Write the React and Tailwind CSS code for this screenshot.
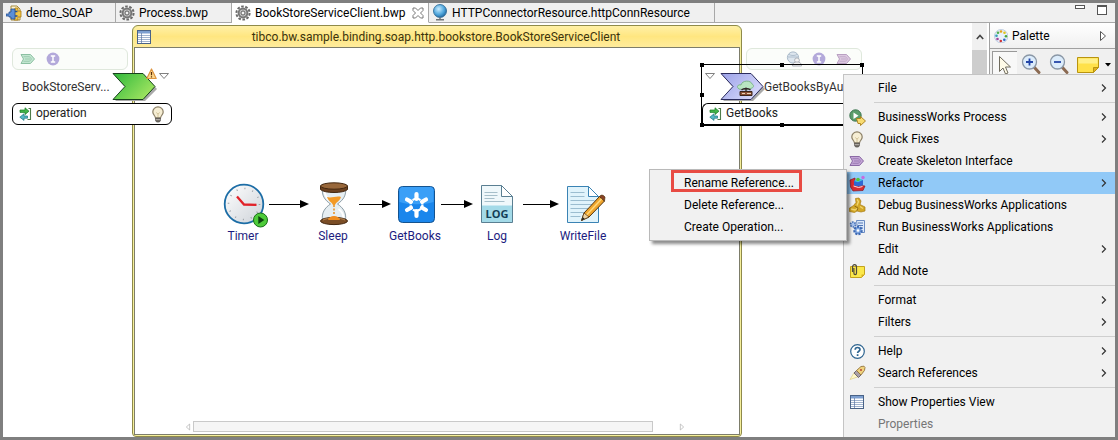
import clsx from 'clsx';

const GearIcon = () => (
  <svg viewBox="0 0 16 16" className="size-4 shrink-0">
    <circle cx="8" cy="8" r="6.6" fill="none" stroke="#6a6a6a" strokeWidth="2" strokeDasharray="2.6 1.55" />
    <circle cx="8" cy="8" r="4.4" fill="#c4c4c4" stroke="#777" strokeWidth="2" />
    <circle cx="8" cy="8" r="2" fill="#f4f4f4" stroke="#555" strokeWidth="0.9" />
  </svg>
);

const SoapIcon = () => (
  <svg viewBox="0 0 16 16" className="size-4 shrink-0">
    <path d="M5 1h6l3 3v11H5z" fill="#fdf3d0" stroke="#a58a3c" />
    <path d="M9 3h3v3h3v6h-3v3H8z" fill="#f2c545" stroke="#a8780f" strokeWidth="0.8" />
    <path d="M0 9h3V7h2V4h4v10H5v-2H3v-1H0z" fill="#5b8fd8" stroke="#274f91" strokeWidth="0.8" />
    <path d="M9 6.5h2.5M9 11h2.5" stroke="#274f91" strokeWidth="1.4" />
  </svg>
);

const GlobeIcon = () => (
  <svg viewBox="0 0 16 17" className="h-[17px] w-4 shrink-0">
    <defs>
      <radialGradient id="globe" cx="0.4" cy="0.35" r="0.7">
        <stop offset="0" stopColor="#c9ecff" />
        <stop offset="0.6" stopColor="#4fa6dc" />
        <stop offset="1" stopColor="#1d6199" />
      </radialGradient>
    </defs>
    <circle cx="8" cy="7" r="6.5" fill="url(#globe)" stroke="#23628f" strokeWidth="0.8" />
    <path d="M8 13.5v2M4 15.8h8" stroke="#6f7478" strokeWidth="1.5" />
  </svg>
);

const TableIcon = ({ className }) => (
  <svg viewBox="0 0 14 14" className={clsx('size-[14px] shrink-0', className)}>
    <rect x="0.5" y="0.5" width="13" height="13" fill="#fff" stroke="#4a6387" />
    <path d="M1 1h12v2.500H1z" fill="#7d9fd0" />
    <path d="M1 5.5h12M1 7.5h12M1 9.5h12M1 11.5h12" stroke="#a2b4cf" />
    <path d="M4.5 3v10" stroke="#5a74a0" strokeWidth="0.7" />
  </svg>
);

const BulbIcon = ({ className }) => (
  <svg viewBox="0 0 14 17" className={clsx('h-[17px] w-[14px] shrink-0', className)}>
    <path d="M7 .8a5.2 5.2 0 0 0-5.2 5.2c0 2.6 2.4 3.6 2.7 6h5c.3-2.4 2.7-3.4 2.7-6A5.2 5.2 0 0 0 7 .8z" fill="#f6eed4" stroke="#8b7f66" strokeWidth="1.2" />
    <path d="M5.2 6.5 7 8l1.8-1.5M7 8v4" fill="none" stroke="#c9b98c" strokeWidth="0.8" />
    <path d="M4.6 12h4.8v2.6L8.4 16H5.6l-1-1.4z" fill="#77726c" stroke="#4c4843" strokeWidth="0.7" />
    <path d="M4.8 13.5h4.4" stroke="#c4c0ba" strokeWidth="0.7" />
  </svg>
);

const OperationIcon = () => (
  <svg viewBox="0 0 13 14" className="h-[14px] w-[13px] shrink-0">
    <path d="M1 3h5V.8l4 3.4-4 3.4V5.4H1z" fill="#42b649" stroke="#187a24" strokeWidth="0.7" />
    <path d="M8.5 9H5V6.8l-4.2 3.4L5 13.4v-2.2h3.5z" fill="#57b9c4" stroke="#1b7480" strokeWidth="0.7" />
    <path d="M9.5 1.5h2v11h-3" fill="none" stroke="#4f7d4a" strokeWidth="1.1" />
  </svg>
);

const MiniChevron = ({ fill, stroke, className }) => (
  <svg viewBox="0 0 16 12" className={clsx('h-3 w-4 shrink-0', className)}>
    <path d="M1 1.500h9.500l4 4.500-4 4.500H1L3.500 6z" fill={fill} stroke={stroke} />
    <path d="M3.500 3.700h6L11.500 6l-2 2.300h-6M5 6h5" fill="none" stroke={stroke} strokeWidth="0.7" />
  </svg>
);

const InfoIcon = () => (
  <svg viewBox="0 0 14 14" className="size-[14px] shrink-0">
    <circle cx="7" cy="7" r="6.4" fill="#b3a9da" />
    <path d="M4.8 4h4.4M7 4v6M4.8 10h4.4" stroke="#fff" strokeWidth="1.5" />
  </svg>
);

const UserGlobeIcon = () => (
  <svg viewBox="0 0 16 16" className="size-4 shrink-0">
    <circle cx="7" cy="6.5" r="5.6" fill="#dde6ee" stroke="#a9bac9" />
    <path d="M1.8 6h10.4M3 3.500c2 1.300 6 1.300 8 0" fill="none" stroke="#a9bac9" strokeWidth="0.9" />
    <circle cx="11" cy="9.3" r="2.4" fill="#f3f3f3" stroke="#a7acb3" strokeWidth="0.9" />
    <path d="M6.500 15c0-3.200 2-4 4.500-4s4.500.8 4.500 4z" fill="#f3f3f3" stroke="#a7acb3" strokeWidth="0.9" />
  </svg>
);

const WarningIcon = () => (
  <svg viewBox="0 0 11 12" className="h-3 w-[11px]">
    <path d="M5.500 1 10.200 10.500H.8z" fill="#fcd68a" stroke="#dd9440" strokeWidth="1.200" strokeLinejoin="round" />
    <path d="M5.500 4v3.300M5.500 8.300v1.200" stroke="#5b2d07" strokeWidth="1.200" />
  </svg>
);

const DownTriangle = () => (
  <svg viewBox="0 0 12 8" className="h-2 w-3">
    <path d="M1.500 1.500h9L6 6.500z" fill="#fff" stroke="#808080" />
  </svg>
);

const RightTriangle = ({ className }) => (
  <svg viewBox="0 0 8 12" className={className}>
    <path d="M1.500 1.500v9L6.500 6z" fill="#fff" stroke="currentColor" />
  </svg>
);

const ServiceShape = ({ green }) => (
  <svg viewBox="0 0 46 30" className="h-[30px] w-[46px] shrink-0">
    <defs>
      <linearGradient id="svcGreen" x1="0" y1="0" x2="1" y2="0.6">
        <stop offset="0" stopColor="#2fb83c" />
        <stop offset="1" stopColor="#a0e460" />
      </linearGradient>
      <linearGradient id="svcBlue" x1="0" y1="0" x2="1" y2="0.6">
        <stop offset="0" stopColor="#9ba1e8" />
        <stop offset="1" stopColor="#d7d9fa" />
      </linearGradient>
    </defs>
    <path d="M3 4h30l12 13-12 12H3l12-12z" fill="#a9a9a9" />
    <path d="M1 1.500h30L43 14.500 31 27.500H1l12-13z" fill={green ? 'url(#svcGreen)' : 'url(#svcBlue)'} stroke={green ? '#17421c' : '#2c2c5e'} />
    {!green && (
      <g>
        <path d="M19 17c-3-2-1-5 2-4 1-5 10-5 11-1 2 1 2 3 0 4l-5 2z" fill="#b9e6c2" stroke="#77b084" strokeWidth="0.9" />
        <path d="M20 19.500h12v4H20z" fill="#8c5036" stroke="#39241b" />
        <path d="M26 15.500v4M21.500 18c2-2 7-2 9 0" stroke="#33282a" strokeWidth="1.300" fill="none" />
        <path d="M22 21.500h3M27 21.500h4" stroke="#e7d2b4" />
      </g>
    )}
  </svg>
);

/* ---- activity icons ---- */

const TimerIcon = () => (
  <svg viewBox="0 0 50 46" className="h-[46px] w-[50px]">
    <defs>
      <linearGradient id="clock" x1="0" y1="0" x2="1" y2="1">
        <stop offset="0" stopColor="#fff" />
        <stop offset="1" stopColor="#cdd2d8" />
      </linearGradient>
    </defs>
    <circle cx="26" cy="22" r="19.3" fill="url(#clock)" stroke="#1c6da6" strokeWidth="1.800" />
    <circle cx="26" cy="22" r="15.5" fill="none" stroke="#9aa0a6" strokeWidth="1.600" strokeDasharray="1 7.116" />
    <path d="M19 14.500 26 22.500 38.500 22.800" fill="none" stroke="#e12229" strokeWidth="2.300" />
    <circle cx="42.500" cy="38" r="7" fill="#4ecb3a" stroke="#176f16" />
    <path d="M40.300 34v8l6-4z" fill="#0c420e" />
  </svg>
);

const HourglassIcon = () => (
  <svg viewBox="0 0 48 46" className="h-[46px] w-12">
    <path d="M13.500 6h23c1 7-2 12-8 16 6 4 9 9 8 16h-23c-1-7 2-12 8-16-6-4-9-9-8-16z" fill="#e6eef2" stroke="#8d9da6" />
    <path d="M15.500 8c0 5 2 8 5 10M34.500 37c0-5-2-8-5-10" fill="none" stroke="#fff" strokeWidth="2" />
    <path d="M18 15c4 1.500 10-1.500 14 0-1 4-5 5-6 8h-2c-1-3-5-4-6-8z" fill="#f39a26" />
    <path d="M25 23v9" stroke="#e88e1e" strokeWidth="1.500" strokeDasharray="2 1.500" />
    <ellipse cx="25" cy="39" rx="13.500" ry="3.600" fill="#7a4d26" stroke="#432710" />
    <path d="M14 38c4-2.500 18-2.500 22 0" fill="none" stroke="#b8854f" />
    <path d="M19 38c1-3 3-4 6-4s5 1 6 4z" fill="#f08c1c" />
    <path d="M11.500 4v3.500c4 4 23 4 27 0V4z" fill="#6d4220" stroke="#432710" />
    <ellipse cx="25" cy="4" rx="13.500" ry="3.200" fill="#98673a" stroke="#432710" />
  </svg>
);

const InvokeIcon = () => (
  <svg viewBox="0 0 48 46" className="h-[46px] w-12">
    <rect x="7.500" y="4.500" width="36" height="36" rx="4" fill="#1a86ec" stroke="#14538f" />
    <path d="M8.500 7.500a3 3 0 0 1 3-2.500h28a3 3 0 0 1 3 2.500V20c-9 3-25 3-34 0z" fill="#3a9ff7" />
    <path
      d="M25.500 12v5M25.500 29v5M16 17.500l4 2.300M35 17.500l-4 2.300M16 28l4-2.300M35 28l-4-2.300"
      stroke="#fff"
      strokeWidth="4.200"
      strokeLinecap="round"
    />
    <circle cx="25.500" cy="22.700" r="6" fill="none" stroke="#fff" strokeWidth="2.200" strokeDasharray="3.500 1.200" />
  </svg>
);

const LogIcon = () => (
  <svg viewBox="0 0 48 46" className="h-[46px] w-12">
    <path d="M8.500 3.500h20l11 11v26h-31z" fill="#eff8fb" stroke="#5a7f92" />
    <path d="M28.500 3.500v11h11z" fill="#fff" stroke="#5a7f92" />
    <path d="M11.500 10.500h13M11.500 13.500h13M11.500 16.500h10M11.500 19.500h20" stroke="#a6bfca" />
    <path d="M9 23.500h30V40H9z" fill="#a3dae8" />
    <text x="24" y="36" textAnchor="middle" fill="#143f57" fontSize="11" fontWeight="700" fontFamily="Open Sans, sans-serif">LOG</text>
  </svg>
);

const WriteFileIcon = () => (
  <svg viewBox="0 0 48 46" className="h-[46px] w-12">
    <path d="M8.500 4.500h21l10 10v26h-31z" fill="#e0f3fb" stroke="#3a83b4" />
    <path d="M29.500 4.500v10h10z" fill="#fff" stroke="#3a83b4" />
    <path d="M11.500 10.500h14M11.500 14.500h14M11.500 18.500h24M11.500 22.500h24M11.500 26.500h18M11.500 30.500h14M11.500 34.500h10" stroke="#9bbdd0" />
    <path d="M22.500 38.500 25 31l15.500-16.500 5 4.500L30 35z" fill="#f0a52c" stroke="#53340f" />
    <path d="m27.500 33 15.500-16.500" stroke="#ffd97c" strokeWidth="1.500" />
    <path d="m40.500 14.500 1.500-1.300q2-.7 4 1.800l-.5 4z" fill="#8a4328" stroke="#53340f" strokeWidth="0.7" />
    <path d="m22.500 38.500 2.500-7.500 5 4z" fill="#eed4a4" stroke="#53340f" strokeWidth="0.7" />
    <path d="m22.500 38.500 1.200-3.500 2 1.700z" fill="#222" />
  </svg>
);

const Arrow = ({ className }) => (
  <div className={clsx('mt-[18px] flex h-2 shrink-0 items-center', className)}>
    <div className="h-px flex-1 bg-black" />
    <svg viewBox="0 0 9 8" className="h-2 w-[9px]">
      <path d="M0 0v8l9-4z" />
    </svg>
  </div>
);

const Activity = ({ icon, label }) => (
  <div className="flex w-12 shrink-0 flex-col items-center whitespace-nowrap text-[#1c1c80]">
    {icon}
    <span className="leading-4">{label}</span>
  </div>
);

/* ---- context menu icons ---- */

const ProcessIcon = () => (
  <svg viewBox="0 0 17 17" className="size-[17px]">
    <circle cx="6.5" cy="6.5" r="5.7" fill="#5a9d6b" stroke="#3c7550" />
    <path d="M4.500 3.500v6.500l5-3.200z" fill="#fff" />
    <path d="M7.500 9.500h4V7.500l5 4.500-5 4.500v-2H9z" fill="#f8dc72" stroke="#a87d17" strokeWidth="0.9" />
  </svg>
);

const RefactorIcon = () => (
  <svg viewBox="0 0 17 17" className="size-[17px]">
    <path d="M1 5 6 3v7l10 1-2 4.500-10 .5-2.500-4z" fill="#d92c31" stroke="#851a28" strokeWidth="0.7" />
    <path d="M5 6l4-2 5 1v5l-4 1.500-5-1z" fill="#2f66d3" />
    <path d="M5 6l4 1.200 5-2.200-5-1.500z" fill="#42c7e0" />
    <circle cx="9" cy="4.500" r="1.800" fill="#56c436" />
    <circle cx="14" cy="2.500" r="1.700" fill="#c76be0" />
    <path d="m4.500 11 5 1.500 4-1" stroke="#ffd9d9" fill="none" />
  </svg>
);

const DebugIcon = () => (
  <svg viewBox="0 0 17 17" className="size-[17px]">
    <path d="M6.500 1.500 10 1l2 3-1 3.500 5 2.500v4l-4 1-4-1-2.500 1.500-5-1-.5-3 4.500-3 2.500-3z" fill="#d3a726" stroke="#a87b12" strokeWidth="0.7" />
    <path d="m8 2.500 1.500 2-1.500 4M2 12l4 1 3-2M11 9.500l3 2" fill="none" stroke="#f1d56d" strokeWidth="1.300" />
    <path d="m5.500 9 3.500 2-1 2.500" fill="none" stroke="#8f6a10" />
  </svg>
);

const RunIcon = () => (
  <svg viewBox="0 0 17 17" className="size-[17px]">
    <path d="M7.500 1.500h8v12H9z" fill="#dce9fa" stroke="#6b8cc2" />
    <path d="M9 4h5M9 6.500h5M10 9h4" stroke="#5478b6" />
    <circle cx="4" cy="5.500" r="2.500" fill="#a7c3ee" stroke="#4a73b8" strokeWidth="1.700" strokeDasharray="1.600 1" />
    <circle cx="9" cy="11.500" r="3.700" fill="#7fa6e0" stroke="#3e69b3" strokeWidth="2.200" strokeDasharray="2 1.200" />
    <circle cx="9" cy="11.500" r="1.300" fill="#fff" />
  </svg>
);

const NoteIcon = () => (
  <svg viewBox="0 0 17 17" className="size-[17px]">
    <path d="M1.500 3.500h14v8l-3 3h-11z" fill="#fbe84a" stroke="#c4a31e" />
    <path d="M12.500 14.500v-3h3z" fill="#d8ae20" />
    <path d="M3.500 9V4a2 2.300 0 0 1 4 0v6a1.300 1.600 0 0 1-2.600 0V5" fill="none" stroke="#4f4a3b" strokeWidth="1.200" />
  </svg>
);

const HelpIcon = () => (
  <svg viewBox="0 0 17 17" className="size-[17px]">
    <circle cx="8.500" cy="8.500" r="6.800" fill="#fff" stroke="#2f6590" strokeWidth="1.200" />
    <path d="M6.200 6.800c0-3 4.800-3 4.800-.2 0 1.700-2.400 1.700-2.400 3.500M8.600 11.200V13" fill="none" stroke="#2f6590" strokeWidth="1.700" />
  </svg>
);

const SearchRefIcon = () => (
  <svg viewBox="0 0 17 17" className="size-[17px]">
    <path d="M1 14.500 5.500 7l4.500 4.500z" fill="#fff8c9" stroke="#d8c774" strokeWidth="0.6" />
    <path d="m5 8 2.500-2.500 4.500 4.500L9.500 12.500z" fill="#a9a0a8" stroke="#675f66" strokeWidth="0.9" />
    <path d="m7.500 5.500 4.500-4 3-.3 1 1.200-.5 3-3.500 4.600z" fill="#f0d27e" stroke="#94753a" strokeWidth="0.9" />
    <circle cx="12" cy="5" r="0.9" fill="#b03a2e" />
  </svg>
);

const MENU = [
  { label: 'File', sub: true },
  null,
  { label: 'BusinessWorks Process', sub: true, icon: <ProcessIcon /> },
  { label: 'Quick Fixes', sub: true, icon: <BulbIcon /> },
  { label: 'Create Skeleton Interface', icon: <MiniChevron fill="#c3a5d6" stroke="#8b6aa5" /> },
  { label: 'Refactor', sub: true, icon: <RefactorIcon />, active: true },
  { label: 'Debug BusinessWorks Applications', icon: <DebugIcon /> },
  { label: 'Run BusinessWorks Applications', icon: <RunIcon /> },
  { label: 'Edit', sub: true },
  { label: 'Add Note', icon: <NoteIcon /> },
  null,
  { label: 'Format', sub: true },
  { label: 'Filters', sub: true },
  null,
  { label: 'Help', sub: true, icon: <HelpIcon /> },
  { label: 'Search References', sub: true, icon: <SearchRefIcon /> },
  null,
  { label: 'Show Properties View', icon: <TableIcon /> },
  { label: 'Properties', disabled: true },
];

const SUBMENU = ['Rename Reference...', 'Delete Reference...', 'Create Operation...'];

function ContextMenu() {
  return (
    <div role="menu" className="absolute top-[71px] right-0 w-[272px] border-t border-l border-[#c4c4c4] bg-[#f1f1f1] py-0.5">
      {MENU.map((item, i) =>
        item ? (
          <button
            key={item.label}
            type="button"
            role="menuitem"
            disabled={item.disabled}
            className={clsx(
              'flex h-[22px] w-full items-center pr-2 text-left',
              item.active && 'bg-[#91c9f7]',
              item.disabled && 'text-[#767676]'
            )}
          >
            <span className="flex w-[34px] justify-center pr-2">{item.icon}</span>
            <span className="flex-1">{item.label}</span>
            {item.sub && (
              <svg viewBox="0 0 6 8" className="h-2 w-1.5">
                <path d="m1 .5 3.500 3.500L1 7.500" fill="none" stroke="#333" strokeWidth="1.200" />
              </svg>
            )}
          </button>
        ) : (
          <div key={i} className="flex h-[7px] items-center pl-[30px]">
            <div className="h-px w-full bg-[#cfcfcf]" />
          </div>
        )
      )}

      {/* Refactor submenu */}
      <div role="menu" className="absolute top-[94px] right-[268px] w-[198px] border border-[#b9b9b9] bg-[#f1f1f1] py-0.5 shadow-[3px_3px_3px_rgba(0,0,0,0.45)]">
        {SUBMENU.map((label) => (
          <button key={label} type="button" role="menuitem" className="flex h-[22px] w-full items-center pl-[34px] text-left">
            {label}
          </button>
        ))}
        <div className="absolute top-0 left-[21px] h-[22px] w-[131px] border-3 border-[#e84b43]" />
      </div>
    </div>
  );
}

const Tab = ({ icon, label, active, closable, className }) => (
  <button
    type="button"
    role="tab"
    aria-selected={!!active}
    className={clsx(
      'flex h-5 shrink-0 items-center gap-1 border-r border-b border-r-[#a8a8a8] pl-[3px]',
      active ? 'border-b-white bg-white' : 'border-b-[#a8a8a8]',
      className
    )}
  >
    {icon}
    <span className="whitespace-nowrap">{label}</span>
    {closable && (
      <svg viewBox="0 0 12 12" className="mr-1 ml-auto size-3 shrink-0">
        <path d="M1 1h2.500L6 3.500 8.500 1H11v2.500L8.500 6 11 8.500V11H8.500L6 8.500 3.500 11H1V8.500L3.500 6 1 3.500z" fill="#fff" stroke="#777" />
      </svg>
    )}
  </button>
);

function TabBar() {
  return (
    <div role="tablist" className="flex h-5 bg-[#f0f0f0]">
      <Tab icon={<SoapIcon />} label="demo_SOAP" className="w-[113px] pl-0" />
      <Tab icon={<GearIcon />} label="Process.bwp" className="w-[116px]" />
      <Tab icon={<GearIcon />} label="BookStoreServiceClient.bwp" active closable className="w-[197px]" />
      <Tab icon={<GlobeIcon />} label="HTTPConnectorResource.httpConnResource" className="w-[286px]" />
      <div className="flex flex-1 justify-end gap-3 border-b border-[#a8a8a8] pr-2">
        <button type="button" aria-label="Minimize" className="mt-0.5 h-1 w-[10px] border border-[#555] bg-white" />
        <button type="button" aria-label="Maximize" className="mt-0.5 h-[10px] w-[10px] border border-t-2 border-[#555] bg-white" />
      </div>
    </div>
  );
}

const Handle = ({ className }) => <span className={clsx('absolute size-1 bg-black', className)} />;

function ServiceColumn() {
  return (
    <div className="relative z-10 w-[129px] shrink-0 pt-[25px] pl-[9px]">
      <div className="flex h-[22px] w-[116px] items-center gap-[10px] rounded-md border border-[#dfe8dc] bg-[#fbfdfa] pl-[7px]">
        <MiniChevron fill="#c2e6d0" stroke="#8cc0a2" />
        <InfoIcon />
      </div>
      <div className="relative flex h-[33px] w-40 items-center pl-[10px] text-[#333]">
        <span className="w-[90px] whitespace-nowrap">BookStoreServ...</span>
        <ServiceShape green />
        <div className="absolute -top-0.5 left-[134px] flex items-end gap-px">
          <WarningIcon />
          <DownTriangle />
        </div>
      </div>
      <div className="flex h-[22px] w-40 items-center gap-1 rounded-md border border-black bg-white pr-[6px] pl-[6px] text-[#222]">
        <OperationIcon />
        <span className="flex-1 pb-0.5 leading-4">operation</span>
        <BulbIcon />
      </div>
    </div>
  );
}

function ProcessFrame() {
  return (
    <div className="mt-0.5 flex min-w-0 flex-1 flex-col rounded-t-md rounded-b-sm border border-[#8f8a4a] bg-[#f5ef9c] px-px pb-px">
      <div className="flex h-[21px] items-center rounded-t-md bg-linear-to-b from-[#fff0a6] via-[#ffe680] to-[#ffec9c] px-[3px] text-[#3b330c]">
        <TableIcon />
        <span className="flex-1 pr-4 text-center">tibco.bw.sample.binding.soap.http.bookstore.BookStoreServiceClient</span>
      </div>
      <div className="flex flex-1 flex-col border border-[#7d7d6a] bg-white">
        <div className="mt-[134px] flex flex-1 pl-[84px]">
          <Activity icon={<TimerIcon />} label="Timer" />
          <Arrow className="ml-0.5 w-10" />
          <Activity icon={<HourglassIcon />} label="Sleep" />
          <Arrow className="ml-0.5 w-8" />
          <Activity icon={<InvokeIcon />} label="GetBooks" />
          <Arrow className="ml-0.5 w-8" />
          <Activity icon={<LogIcon />} label="Log" />
          <Arrow className="ml-0.5 w-9" />
          <Activity icon={<WriteFileIcon />} label="WriteFile" />
        </div>
        <div className="mb-0.5 flex items-center pr-[54px] pl-[50px] text-[#aaa]">
          <RightTriangle className="h-2 w-[6px] rotate-180" />
          <div className="mr-[26px] ml-0.5 h-[11px] flex-1 border border-[#c9c9c9] bg-[#f5f5f5]" />
          <RightTriangle className="h-2 w-[6px]" />
        </div>
      </div>
    </div>
  );
}

function ReferenceColumn() {
  return (
    <div className="relative w-[230px] shrink-0 pt-[25px] pl-1">
      <div className="flex h-[22px] w-[116px] items-center justify-end gap-[10px] rounded-md border border-[#dfe8dc] bg-[#fbfdfa] pr-[9px]">
        <UserGlobeIcon />
        <InfoIcon />
        <MiniChevron fill="#dcc8e0" stroke="#b9a0c2" />
      </div>
      {/* selected reference */}
      <div className="absolute top-[41px] -left-[41px] w-[162px] border border-b-2 border-black">
        <div className="flex h-[38px] items-center text-[#333]">
          <span className="mb-4 ml-0.5">
            <DownTriangle />
          </span>
          <span className="mt-1.5 ml-1">
            <ServiceShape />
          </span>
          <span className="mt-1.5 -ml-0.5 whitespace-nowrap">GetBooksByAu</span>
        </div>
        <div className="flex h-[21px] items-center gap-1 rounded-tl-md border-t border-l border-black bg-white pl-[6px] text-[#222]">
          <OperationIcon />
          <span className="pb-0.5 leading-4">GetBooks</span>
        </div>
        <Handle className="-top-0.5 -left-0.5" />
        <Handle className="-top-0.5 left-[78px]" />
        <Handle className="-top-0.5 -right-0.5" />
        <Handle className="top-7 -left-0.5" />
        <Handle className="-bottom-[3px] -left-0.5" />
        <Handle className="-bottom-[3px] left-[78px]" />
      </div>
    </div>
  );
}

const Magnifier = ({ plus }) => (
  <svg viewBox="0 0 20 20" className="size-5">
    <path d="m13 13 5 5.500" stroke="#8b6a52" strokeWidth="3" strokeLinecap="round" />
    <circle cx="8.500" cy="8" r="7" fill="#dcecfb" stroke="#8a97a6" strokeWidth="1.300" />
    <path d={plus ? 'M5 8h7M8.500 4.500v7' : 'M5 8h7'} stroke="#2446a8" strokeWidth="1.800" />
  </svg>
);

const PALETTE_DOTS = [
  [7, 2.5, '#e6a21c'],
  [10.5, 3.8, '#e2c51d'],
  [12, 7.3, '#48a83c'],
  [10.3, 10.8, '#2d66c9'],
  [6.8, 12, '#cf3636'],
  [3.5, 10, '#a3449c'],
  [2.5, 6.7, '#35a0b8'],
  [4, 3.8, '#52b04a'],
];

function Palette() {
  return (
    <div className="w-[126px] shrink-0 border-l border-[#a0a0a0] bg-[#f0f0f0]">
      <div className="flex h-[26px] items-center border-b border-[#a0a0a0] bg-linear-to-b from-white to-[#f0f0f0] pr-2 pl-1">
        <svg viewBox="0 0 14 14" className="size-[14px]">
          <circle cx="7.2" cy="7.2" r="6.7" fill="#e9f1fb" stroke="#b3c3da" strokeWidth="0.8" />
          {PALETTE_DOTS.map(([x, y, color]) => (
            <circle key={color} cx={x} cy={y} r="1.3" fill={color} />
          ))}
        </svg>
        <span className="ml-1 flex-1">Palette</span>
        <RightTriangle className="h-3 w-2 text-[#555]" />
      </div>
      <div className="flex h-[30px] items-center gap-2 pl-0.5">
        <button type="button" aria-label="Select" className="mt-0.5 flex h-7 w-[25px] items-center justify-center border-t border-l border-[#999] bg-[#f8f8f8]">
          <svg viewBox="0 0 14 21" className="h-[21px] w-[14px]">
            <path d="M1.500 1.500v15l3.500-3.500 2.500 6 2.500-1-2.500-6h5z" fill="#fffbe8" stroke="#6f6b5e" />
          </svg>
        </button>
        <button type="button" aria-label="Zoom in" className="-ml-1">
          <Magnifier plus />
        </button>
        <button type="button" aria-label="Zoom out">
          <Magnifier />
        </button>
        <button type="button" aria-label="Note" className="flex items-center gap-1.5 pt-0.5">
          <svg viewBox="0 0 22 16" className="h-4 w-[22px]">
            <path d="M.5.5h21v10l-5 5H.5z" fill="#ffe14a" stroke="#b9940f" />
            <path d="M1.500 1.500h19v5h-19z" fill="#fff08a" />
            <path d="M16.500 15.500v-5h5z" fill="#e0b01e" stroke="#b9940f" />
          </svg>
          <svg viewBox="0 0 6 4" className="h-1 w-1.5">
            <path d="M0 0h6L3 3.500z" />
          </svg>
        </button>
      </div>
    </div>
  );
}

export default function App() {
  return (
    <div className="h-screen min-w-[1000px] overflow-hidden border-3 border-[#7f7f7f] bg-white font-['Roboto',sans-serif] text-[12px] text-black">
      <div className="relative flex h-full flex-col">
        <TabBar />
        <div className="flex min-h-0 flex-1">
          <div className="flex min-w-0 flex-1">
            <ServiceColumn />
            <ProcessFrame />
            <ReferenceColumn />
          </div>
          <div className="mr-0.5 flex w-[15px] shrink-0 flex-col bg-[#f0f0f0]">
            <div className="flex h-[27px] items-center justify-center">
              <svg viewBox="0 0 8 6" className="h-1.5 w-2">
                <path d="m.8 5 3.200-3.500L7.200 5" fill="none" stroke="#444" strokeWidth="1.600" />
              </svg>
            </div>
            <div className="flex-1 bg-[#cdcdcd]" />
          </div>
          <Palette />
        </div>
        <ContextMenu />
      </div>
    </div>
  );
}
